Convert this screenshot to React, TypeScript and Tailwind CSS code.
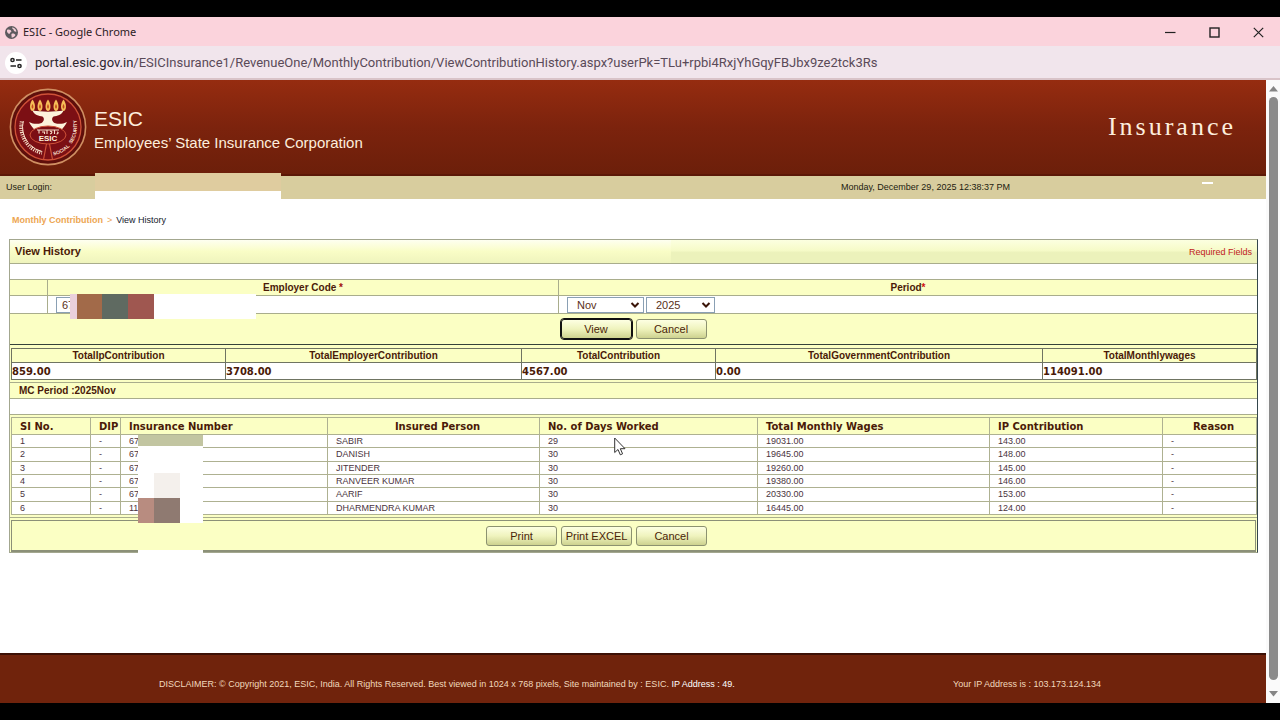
import React from "react";

const totals = [
  { name: "TotalIpContribution", value: "859.00" },
  { name: "TotalEmployerContribution", value: "3708.00" },
  { name: "TotalContribution", value: "4567.00" },
  { name: "TotalGovernmentContribution", value: "0.00" },
  { name: "TotalMonthlywages", value: "114091.00" },
];

const people = [
  { id: 1, num: "67", name: "SABIR", days: "29", wages: "19031.00", ip: "143.00" },
  { id: 2, num: "67", name: "DANISH", days: "30", wages: "19645.00", ip: "148.00" },
  { id: 3, num: "67", name: "JITENDER", days: "30", wages: "19260.00", ip: "145.00" },
  { id: 4, num: "67", name: "RANVEER KUMAR", days: "30", wages: "19380.00", ip: "146.00" },
  { id: 5, num: "67", name: "AARIF", days: "30", wages: "20330.00", ip: "153.00" },
  { id: 6, num: "11", name: "DHARMENDRA KUMAR", days: "30", wages: "16445.00", ip: "124.00" },
];

const headings = [
  { text: "SI No.", align: "text-left" },
  { text: "DIP", align: "text-left" },
  { text: "Insurance Number", align: "text-left" },
  { text: "Insured Person", align: "text-center" },
  { text: "No. of Days Worked", align: "text-left" },
  { text: "Total Monthly Wages", align: "text-left" },
  { text: "IP Contribution", align: "text-left" },
  { text: "Reason", align: "text-center" },
];

function Emblem() {
  return (
    <svg className="size-[78px] shrink-0" viewBox="0 0 78 78" aria-label="ESIC emblem" role="img">
      <circle cx="39" cy="39" r="37.6" fill="#5f0f0b" stroke="#cf8f62" strokeWidth="1.6" />
      <circle cx="39" cy="39" r="33" fill="#7c0f14" stroke="#cf5238" strokeWidth="1.3" />
      {[23.5, 31, 39, 47, 54.5].map((x) => (
        <g key={x}>
          <path d={`M${x} 11.5 C${x + 3.6} 16 ${x + 3} 23 ${x} 23 C${x - 3} 23 ${x - 3.6} 16 ${x} 11.5Z`} fill="#f6bd58" />
          <path d={`M${x} 16 C${x + 1.3} 18 ${x + 1.1} 20.5 ${x} 20.5 C${x - 1.1} 20.5 ${x - 1.3} 18 ${x} 16Z`} fill="#c24a1c" />
        </g>
      ))}
      <path d="M23.500 22.500 C33 24 45 24 54.500 22.500 C53 27 48 28 44.500 28.500 C42.500 30 42.500 33 45.500 35 C50 36.500 54 36 58 34 C56.500 37 54.500 39.500 52 42.500 C44 38.500 34 38.500 26 42.500 C23.500 39.500 21.500 37 20 34 C24 36 28 36.500 32.500 35 C35.500 33 35.500 30 33.500 28.500 C30 28 25 27 23.500 22.500Z" fill="#fdf3dc" />
      <ellipse cx="39" cy="47" rx="18" ry="9" fill="#7c0f14" stroke="#cf5238" strokeWidth="1" />
      <path d="M28 42h22M30 42v3.500M33 44h2.500v2M38 42v4M41 43.500c2.500-1 2.500 2 0 2.500M45.500 42v4M48 44c2 0 1 2-.5 2" stroke="#f6dfc8" strokeWidth="1.100" fill="none" />
      <text x="39" y="53" textAnchor="middle" fontSize="8" fontWeight="700" fill="#fdf3dc" fontFamily="Liberation Sans, sans-serif">ESIC</text>
      <path d="M37.500 56 L34.500 71.500 M40.500 56 L43.500 71.500" stroke="#cf5238" strokeWidth="1.200" />
      <path id="emblem-bottom" d="M44.500 67.500 A29 29 0 0 0 61 58" fill="none" />
      <path id="emblem-right" d="M62.500 56 A29 29 0 0 0 67 31" fill="none" />
      <g fontSize="5" fontWeight="700" fill="#f6dfc8" fontFamily="Liberation Sans, sans-serif">
        <text><textPath href="#emblem-bottom">SOCIAL</textPath></text>
        <text><textPath href="#emblem-right">SECURITY</textPath></text>
      </g>
      <path d="M14.300 33 A25.300 25.300 0 0 0 33 63.500" fill="none" stroke="#f6dfc8" strokeWidth="1" strokeDasharray="22 4 20" />
      <path d="M12.600 33.500 A27 27 0 0 0 33 65" fill="none" stroke="#f6dfc8" strokeWidth="3.600" strokeDasharray="1 1.300 0.800 0.900 1.200 1.200" />
    </svg>
  );
}

function FormButton({ children, focused }: { children: React.ReactNode; focused?: boolean }) {
  return (
    <button
      type="button"
      className={
        "h-5 w-[71px] rounded-[3px] border bg-linear-to-b from-[#fdffe2] via-[#eff3bd] to-[#cdd28f] pt-px text-[11px] leading-none text-[#4a2408] " +
        (focused ? "border-[#111] outline outline-[#111]" : "border-[#8c9270]")
      }
    >
      {children}
    </button>
  );
}

function PeriodSelect({ label, value, width }: { label: string; value: string; width: string }) {
  return (
    <div className={"relative " + width}>
      <select
        aria-label={label}
        defaultValue={value}
        className="block h-4 w-full appearance-none border border-[#8aa0b4] bg-white pl-[9px] text-[11px] leading-none text-[#5a3020]"
      >
        <option>{value}</option>
      </select>
      <svg className="pointer-events-none absolute top-1 right-1 h-2 w-[10px]" viewBox="0 0 10 8">
        <path d="M1.500 2 L5 5.500 L8.500 2" fill="none" stroke="#3a1408" strokeWidth="2" />
      </svg>
    </div>
  );
}

export default function App() {
  return (
    <div className="flex min-h-screen flex-col bg-black font-['Liberation_Sans',Arial,sans-serif]">
      <div className="flex flex-1 flex-col py-[17px]">
        <header>
          <div className="flex h-[29px] items-center bg-[#fbd3dc] pt-px pl-[5px] font-['Noto_Sans',sans-serif]">
            <svg className="size-[13px]" viewBox="0 0 13 13">
              <circle cx="6.500" cy="6.500" r="6.500" fill="#5d5a5e" />
              <path d="M2 4 C4 3 6 4 6.500 5.500 C5 6 5.500 7.500 4 8 C3 7 1.500 6.500 2 4Z M7 1.500 C9 1.500 11 3 11.500 5.500 C10 6 8.500 5 8.500 3.500 C8 3 7 2.500 7 1.500Z M6.500 8 C8 7 10 8 10.500 9 C9.500 11 8 11.500 6.500 11.500 C7 10 6 9.500 6.500 8Z" fill="#f3ccd6" />
            </svg>
            <h1 className="ml-[5px] text-[11px] text-[#2b2024]">ESIC - Google Chrome</h1>
            <div className="ml-auto flex items-center gap-[33px] pr-4">
              <button type="button" aria-label="Minimize">
                <svg className="size-[11px]" viewBox="0 0 11 11"><path d="M0 5.500h10.500" stroke="#222" strokeWidth="1.200" /></svg>
              </button>
              <button type="button" aria-label="Maximize">
                <svg className="size-[11px]" viewBox="0 0 11 11"><rect x="1" y="1" width="9" height="9" fill="none" stroke="#222" strokeWidth="1.400" /></svg>
              </button>
              <button type="button" aria-label="Close">
                <svg className="size-[11px]" viewBox="0 0 11 11"><path d="M.8.8l9.400 9.400M10.200.8L.8 10.200" stroke="#222" strokeWidth="1.200" /></svg>
              </button>
            </div>
          </div>
          <div className="flex h-[34px] items-center border-b-2 border-[#d9c3c8] bg-[#f1e5ec] pt-px pl-[5px]">
            <span className="flex size-[22px] items-center justify-center rounded-full bg-white">
              <svg className="size-3" viewBox="0 0 12 12" fill="none" stroke="#222" strokeWidth="1.500">
                <circle cx="2.500" cy="3" r="1.600" />
                <path d="M6 3h5.500M.5 9h5.500" />
                <circle cx="9.500" cy="9" r="1.600" />
              </svg>
            </span>
            <p className="ml-2 font-['Roboto',sans-serif] text-[13px] text-[#5a4a58]">
              <span className="text-[#2d2530]">portal.esic.gov.in</span>/ESICInsurance1/RevenueOne/MonthlyContribution/ViewContributionHistory.aspx?userPk=TLu+rpbi4RxjYhGqyFBJbx9ze2tck3Rs
            </p>
          </div>
        </header>

        <div className="flex flex-1 bg-white">
          <div className="flex min-w-0 flex-1 flex-col">
            <div className="flex h-24 items-center border-b-2 border-[#5c1807] bg-linear-to-b from-[#962c10] via-[#7c230d] to-[#6c1f0a] pr-[30px] pl-[9px] text-[#fdeedd]">
              <Emblem />
              <div className="ml-[7px] pt-2">
                <p className="text-[21px] leading-6">ESIC</p>
                <p className="text-[15px] leading-6">Employees’ State Insurance Corporation</p>
              </div>
              <p className="ml-auto font-['Liberation_Serif',serif] text-[26px] leading-6 tracking-[3px]">Insurance</p>
            </div>

            <div className="relative grid h-[23px] grid-cols-[841fr_425fr] items-center bg-[#d8cd9e] pt-px text-[9px] text-[#1c1c10]">
              <p className="pl-[6px]">User Login:</p>
              <p>Monday, December 29, 2025 12:38:37 PM</p>
              <div className="absolute -top-[3px] left-[95px] h-[26px] w-[186px] border-b-8 border-white bg-[#dfcc9f]" />
              <div className="absolute top-[6px] right-[53px] h-0.5 w-[11px] bg-white" />
            </div>

            <main className="flex-1 pr-2 pl-[9px]">
              <nav className="flex h-10 items-center gap-1 pt-1 pl-[3px] text-[9px]">
                <a href="#monthly" className="font-bold text-[#eda552]">Monthly Contribution</a>
                <span className="text-[#eda552]">&gt;</span>
                <span className="text-[#14202c]">View History</span>
              </nav>

              <section className="relative border border-[#a3a78f] border-r-[#34464c] bg-[#fbffc4] text-[#4a1a08]">
                <div className="flex h-6 items-center justify-between border-b border-[#a9ad8c] bg-[linear-gradient(#fefff0,#f9fdc6_50%,#eff4bd),linear-gradient(#fcffe0,#f6fbc8_45%,#ecf2bb_55%,#ecf2bb)] bg-[length:53%_100%,100%_100%] bg-no-repeat px-[5px]">
                  <h2 className="text-[11px] font-bold">View History</h2>
                  <span className="pt-[3px] text-[9px] text-[#c02020]">Required Fields</span>
                </div>
                <div className="h-4 border-b border-[#a9ad8c] bg-white" />
                <div className="grid h-4 grid-cols-[37fr_511fr_699fr] border-b border-[#a9ad8c] text-center text-[10px] leading-[15px] font-bold">
                  <span />
                  <label htmlFor="employer" className="border-l border-[#a9ad8c]">Employer Code <span className="text-[#a01010]">*</span></label>
                  <span className="border-l border-[#a9ad8c]">Period<span className="text-[#d01010]">*</span></span>
                </div>
                <div className="grid h-[18px] grid-cols-[37fr_511fr_699fr] border-b border-[#a9ad8c] bg-white">
                  <span />
                  <div className="relative border-l border-[#a9ad8c] pt-px pl-2">
                    <input
                      id="employer"
                      defaultValue="67"
                      className="block h-4 w-24 border border-[#8aa0b4] bg-white pl-[5px] text-[11px] text-[#5a3020]"
                    />
                    <div className="absolute -top-0.5 left-[22px] flex h-[25px] w-[186px] bg-white">
                      <span className="w-[7px] bg-[#ead0dc]" />
                      <span className="w-[25px] bg-[#a26a49]" />
                      <span className="w-[26px] bg-[#5f6a61]" />
                      <span className="w-[26px] bg-[#9f5750]" />
                    </div>
                  </div>
                  <div className="flex gap-0.5 border-l border-[#a9ad8c] pt-px pl-2">
                    <PeriodSelect label="Month" value="Nov" width="w-[77px]" />
                    <PeriodSelect label="Year" value="2025" width="w-[69px]" />
                  </div>
                </div>
                <div className="flex h-[31px] items-center justify-center gap-1 border-b border-[#34423a]">
                  <FormButton focused>View</FormButton>
                  <FormButton>Cancel</FormButton>
                </div>

                <div className="px-px pt-[3px]">
                  <table className="w-full table-fixed border-collapse">
                    <colgroup>
                      <col className="w-[214px]" />
                      <col className="w-[296px]" />
                      <col className="w-[194px]" />
                      <col className="w-[327px]" />
                      <col className="w-[214px]" />
                    </colgroup>
                    <thead>
                      <tr className="h-[14px]">
                        {totals.map((t) => (
                          <th key={t.name} className="border border-[#6f7462] p-0 text-[10px] leading-[13px] font-bold">{t.name}</th>
                        ))}
                      </tr>
                    </thead>
                    <tbody>
                      <tr className="h-[17px] bg-white">
                        {totals.map((t) => (
                          <td key={t.name} className="border border-[#6f7462] p-0 pt-px font-['DejaVu_Sans',sans-serif] text-[10px] leading-[15px] font-bold">{t.value}</td>
                        ))}
                      </tr>
                    </tbody>
                  </table>
                </div>

                <p className="mt-0.5 border-y border-[#a9ad8c] pl-[9px] text-[10px] leading-[15px] font-bold">MC Period :2025Nov</p>
                <div className="h-4 border-b border-[#a9ad8c] bg-white" />

                <div className="relative mt-0.5 px-px">
                  <table className="h-[98px] w-full table-fixed border-collapse">
                    <colgroup>
                      <col className="w-[79px]" />
                      <col className="w-[30px]" />
                      <col className="w-[207px]" />
                      <col className="w-[212px]" />
                      <col className="w-[218px]" />
                      <col className="w-[232px]" />
                      <col className="w-[173px]" />
                      <col className="w-[94px]" />
                    </colgroup>
                    <thead>
                      <tr className="h-[17px]">
                        {headings.map((h) => (
                          <th key={h.text} className={"border border-[#aeb191] p-0 pt-px pl-2 font-['DejaVu_Sans',sans-serif] text-[10px] leading-[15px] font-bold whitespace-nowrap " + h.align}>
                            {h.text}
                          </th>
                        ))}
                      </tr>
                    </thead>
                    <tbody className="bg-white text-[9px] leading-3 text-[#4a3440] [&_td]:border [&_td]:border-[#aeb191] [&_td]:p-0 [&_td]:pl-2">
                      {people.map((p) => (
                        <tr key={p.id}>
                          <td>{p.id}</td>
                          <td>-</td>
                          <td>{p.num}</td>
                          <td>{p.name}</td>
                          <td>{p.days}</td>
                          <td>{p.wages}</td>
                          <td>{p.ip}</td>
                          <td>-</td>
                        </tr>
                      ))}
                    </tbody>
                  </table>
                  <div className="absolute top-[18px] left-[128px] z-10 h-[88px] w-[65px] bg-white">
                    <div className="h-[11px] bg-[#c2c5a1]" />
                    <div className="mt-[27px] ml-4 h-[25px] w-[26px] bg-[#f4f0ec]" />
                    <div className="flex h-[25px]">
                      <span className="w-4 bg-[#b88c80]" />
                      <span className="w-[26px] bg-[#8f7a71]" />
                    </div>
                  </div>
                  <svg className="absolute top-5 left-[604px] h-[19px] w-3" viewBox="0 0 12 19">
                    <path d="M.7 1v14.500l3.300-3 2.300 5.300 2.300-1-2.300-5.100h4.700z" fill="#fff" stroke="#333" strokeWidth="1" />
                  </svg>
                </div>

                <div className="mt-0.5 border-t border-[#a9ad8c] px-px pt-0.5">
                  <div className="flex h-8 items-center justify-center gap-1 border border-b-2 border-[#8b9078] pr-[74px]">
                    <FormButton>Print</FormButton>
                    <FormButton>Print EXCEL</FormButton>
                    <FormButton>Cancel</FormButton>
                  </div>
                </div>
                <div className="absolute -bottom-px left-[128px] h-[3px] w-[65px] bg-white" />
              </section>
            </main>

            <footer className="grid h-[50px] grid-cols-[953fr_313fr] items-center border-t-2 border-[#3c1006] bg-[#70230c] pt-3 text-[9px] text-[#f0d8bc]">
              <p className="pl-[159px]">
                DISCLAIMER: © Copyright 2021, ESIC, India. All Rights Reserved. Best viewed in 1024 x 768 pixels, Site maintained by : ESIC. <span className="text-white">IP Address : 49.</span>
              </p>
              <p>Your IP Address is : 103.173.124.134</p>
            </footer>
          </div>

          <div className="flex w-[14px] flex-col items-center gap-[5px] bg-[#fafafa] py-[6px]">
            <svg className="h-[6px] w-[9px]" viewBox="0 0 9 6"><path d="M4.500 0L9 5.500H0z" fill="#858585" /></svg>
            <div className="w-[9px] flex-1 rounded-full bg-[#8a8a8a]" />
            <svg className="mt-[6px] h-[6px] w-[9px]" viewBox="0 0 9 6"><path d="M4.500 5.500L9 0H0z" fill="#858585" /></svg>
          </div>
        </div>
      </div>
    </div>
  );
}
